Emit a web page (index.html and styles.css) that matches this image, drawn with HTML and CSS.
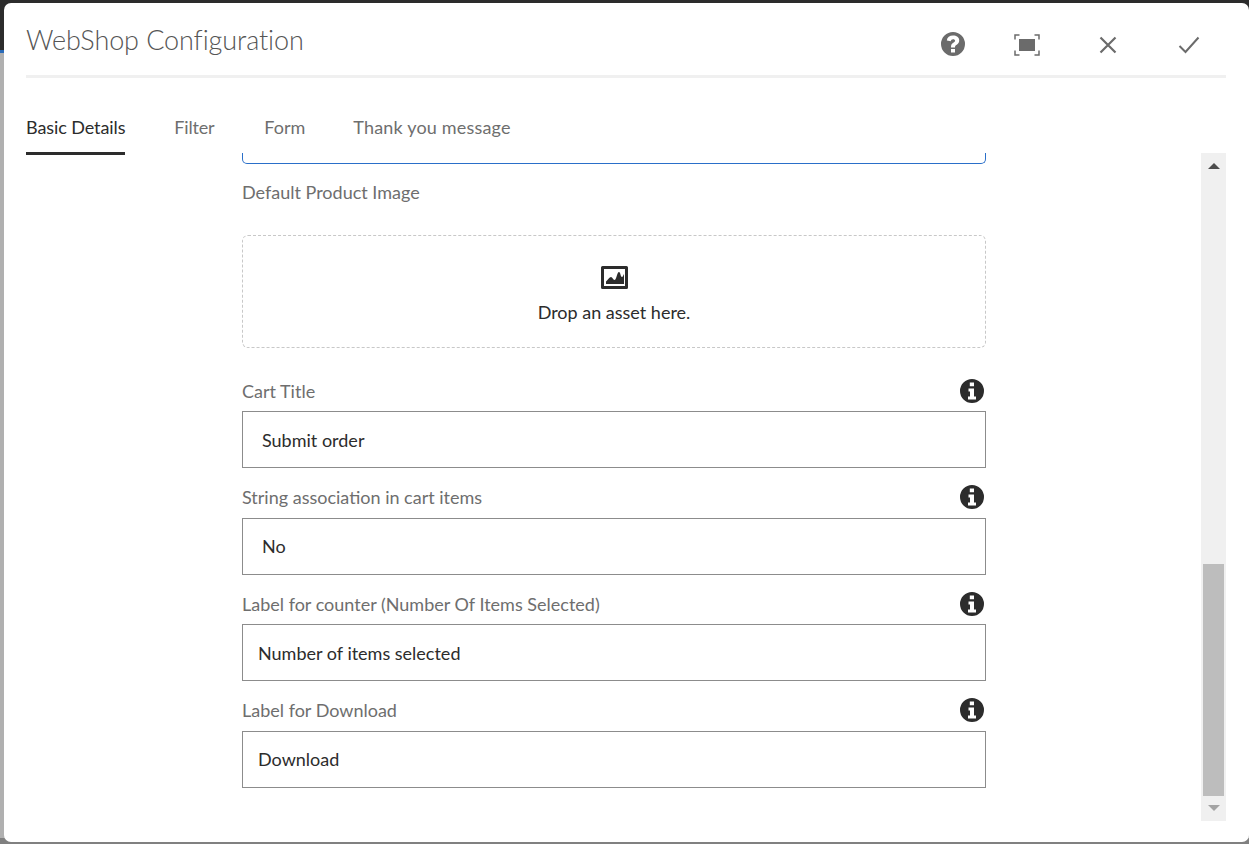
FILE: index.html
```html
<!DOCTYPE html>
<html lang="en">

<head>
  <meta charset="UTF-8" />
  <meta name="viewport" content="width=device-width, initial-scale=1.0" />
  <title>WebShop Configuration</title>
  <link rel="stylesheet" href="styles.css">
</head>

<body>

  <div class="dialog">
    <header class="dialog-header">
      <h1 class="dialog-title">WebShop Configuration</h1>
      <div class="dialog-actions">
        <svg class="action action-help" viewBox="0 0 24 24">
          <path fill-rule="evenodd" d="M12 0a12 12 0 1 0 0 24 12 12 0 0 0 0-24zM10 17h4v3.500h-4zM5.800 8.600C6.200 5.200 8.600 3.600 12 3.600c3.600 0 6.200 1.900 6.200 4.900 0 2.200-1.100 3.300-2.500 4.200-1.200.8-1.700 1.300-1.700 2.600v.2h-4v-.6c0-2.100.9-3.200 2.300-4.100 1.100-.7 1.800-1.200 1.800-2.100 0-.9-.8-1.500-2-1.500-1.400 0-2.200.8-2.300 2.100z" />
        </svg>
        <svg class="action action-fullscreen" viewBox="0 0 26 22">
          <rect x="5" y="5" width="16" height="12" />
          <path class="corner" d="M5.500 1H1v4.500M20.500 1H25v4.500M5.500 21H1v-4.500M20.500 21H25v-4.500" />
        </svg>
        <svg class="action action-close" viewBox="0 0 18 18">
          <path d="M1.500 1.500l15 15M16.500 1.500l-15 15" />
        </svg>
        <svg class="action action-done" viewBox="0 0 22 18">
          <path d="M1.500 10l6 6L20.500 1.500" />
        </svg>
      </div>
    </header>

    <nav class="tabs">
      <a class="tab active">Basic Details</a>
      <a class="tab tab-filter">Filter</a>
      <a class="tab">Form</a>
      <a class="tab tab-thanks">Thank you message</a>
    </nav>

    <div class="dialog-body">
      <div class="form-scroll">
        <div class="form">
          <div class="focused-field"></div>

          <div class="image-label">Default Product Image</div>
          <div class="dropzone">
            <svg class="dropzone-icon" viewBox="0 0 27 23">
              <path fill-rule="evenodd" d="M1.500 0h24A1.500 1.500 0 0 1 27 1.500v20a1.500 1.500 0 0 1-1.500 1.500h-24A1.500 1.500 0 0 1 0 21.500v-20A1.500 1.500 0 0 1 1.500 0zM3 3v17h21V3z" />
              <path d="M5 18v-2.500C6.500 14 8.500 11 10 11c1.500 0 2 3 3.500 3 2 0 2.500-8 4.500-8 1.500 0 1.500 5 3 5 .8 0 1.200-2 2-3v10z" />
            </svg>
            <div>Drop an asset here.</div>
          </div>

          <div class="field field-first">
            <div class="field-label">
              <span>Cart Title</span>
              <svg class="info" viewBox="0 0 24 24"><path fill-rule="evenodd" d="M12 0a12 12 0 1 0 0 24 12 12 0 0 0 0-24zM9.800 3.500h4.200v3.800H9.800zM8.500 9.500H14v8h2v3H8v-3h2v-5H8.500z" /></svg>
            </div>
            <div class="field-input indent">Submit order</div>
          </div>

          <div class="field">
            <div class="field-label">
              <span>String association in cart items</span>
              <svg class="info" viewBox="0 0 24 24"><path fill-rule="evenodd" d="M12 0a12 12 0 1 0 0 24 12 12 0 0 0 0-24zM9.800 3.500h4.200v3.800H9.800zM8.500 9.500H14v8h2v3H8v-3h2v-5H8.500z" /></svg>
            </div>
            <div class="field-input indent">No</div>
          </div>

          <div class="field">
            <div class="field-label">
              <span>Label for counter (Number Of Items Selected)</span>
              <svg class="info" viewBox="0 0 24 24"><path fill-rule="evenodd" d="M12 0a12 12 0 1 0 0 24 12 12 0 0 0 0-24zM9.800 3.500h4.200v3.800H9.800zM8.500 9.500H14v8h2v3H8v-3h2v-5H8.500z" /></svg>
            </div>
            <div class="field-input">Number of items selected</div>
          </div>

          <div class="field">
            <div class="field-label">
              <span>Label for Download</span>
              <svg class="info" viewBox="0 0 24 24"><path fill-rule="evenodd" d="M12 0a12 12 0 1 0 0 24 12 12 0 0 0 0-24zM9.800 3.500h4.200v3.800H9.800zM8.500 9.500H14v8h2v3H8v-3h2v-5H8.500z" /></svg>
            </div>
            <div class="field-input">Download</div>
          </div>
        </div>
      </div>

      <div class="scrollbar">
        <div class="arrow arrow-up"></div>
        <div class="thumb"></div>
        <div class="arrow arrow-down"></div>
      </div>
    </div>
  </div>

</body>

</html>
```

FILE: styles.css
```css
html,
body {
  height: 100%;
}

body {
  margin: 0;
  padding: 3px 0 2px 4px;
  box-sizing: border-box;
  overflow: hidden;
  font-family: "Lato", "Open Sans", sans-serif;
  color: #2c2c2c;
  /* page behind the modal */
  background: linear-gradient(#2c2c2c 0, #2c2c2c 50px, #2a6bb8 50px, #2a6bb8 53px, #b0b0b0 53px, #b0b0b0 838px, #808080 838px);
}

.dialog {
  height: 839px;
  display: flex;
  flex-direction: column;
  background: #ffffff;
  border-radius: 7px;
}

/* Header */
.dialog-header {
  height: 72px;
  margin: 0 23px 0 22px;
  display: flex;
  justify-content: space-between;
  align-items: center;
  border-bottom: 3px solid #f0f0f0;
}

.dialog-title {
  margin: 1px 0 0;
  font-size: 27px;
  font-weight: 300;
  letter-spacing: -0.1px;
  color: #555555;
}

.dialog-actions {
  height: 26px;
  margin-top: 10px;
  position: relative;
  width: 285px;
}

.action {
  position: absolute;
  fill: #6b6b6b;
}

.action-help {
  left: 0;
  top: 1px;
  width: 24px;
  height: 24px;
}

.action-fullscreen {
  left: 73px;
  top: 3px;
  width: 26px;
  height: 22px;
}

.action-fullscreen .corner {
  fill: none;
  stroke: #6b6b6b;
  stroke-width: 1.500;
}

.action-close {
  left: 158px;
  top: 5px;
  width: 18px;
  height: 18px;
  fill: none;
  stroke: #6b6b6b;
  stroke-width: 2.200;
}

.action-done {
  left: 237px;
  top: 5px;
  width: 22px;
  height: 18px;
  fill: none;
  stroke: #6b6b6b;
  stroke-width: 2;
}

/* Tabs */
.tabs {
  height: 75px;
  margin-left: 22px;
  display: flex;
  align-items: flex-end;
  gap: 48px;
  flex-shrink: 0;
}

.tab {
  height: 53px;
  box-sizing: border-box;
  padding-top: 14px;
  font-size: 18px;
  color: #6e6e6e;
  margin-bottom: -2px;
  position: relative;
  z-index: 1;
}

.tab.active {
  color: #2c2c2c;
  letter-spacing: -0.09px;
  border-bottom: 3px solid #2c2c2c;
}

.tab-filter {
  margin-left: 1px;
  letter-spacing: -0.2px;
  margin-right: 2px;
}

.tab-thanks {
  letter-spacing: 0.18px;
}

/* Body with scrollbar */
.dialog-body {
  height: 668px;
  display: flex;
  justify-content: space-between;
  padding-right: 23px;
}

.form-scroll {
  flex: 1;
  overflow: hidden;
  padding-left: 238px;
}

.form {
  width: 744px;
  font-size: 18px;
}

.focused-field {
  height: 11px;
  box-sizing: border-box;
  border: 1px solid #2a6fc9;
  border-top: none;
  border-radius: 0 0 5px 5px;
}

.image-label {
  margin-top: 16px;
  line-height: 24px;
  color: #6e6e6e;
}

.dropzone {
  height: 113px;
  margin-top: 31px;
  box-sizing: border-box;
  border: 1px dashed #c8c8c8;
  border-radius: 6px;
  display: flex;
  flex-direction: column;
  align-items: center;
  padding-top: 30px;
  gap: 12px;
}

.dropzone-icon {
  width: 27px;
  height: 23px;
  fill: #2c2c2c;
}

.field {
  margin-top: 15.67px;
}

.field-first {
  margin-top: 29px;
}

.field-label {
  height: 27px;
  display: flex;
  justify-content: space-between;
  align-items: center;
  color: #6e6e6e;
}

.info {
  width: 24px;
  height: 24px;
  margin-right: 2px;
  fill: #2c2c2c;
}

.field-input {
  height: 57px;
  box-sizing: border-box;
  margin-top: 7px;
  padding: 0 15px;
  border: 1px solid #8c8c8c;
  display: flex;
  align-items: center;
  background: #ffffff;
}

.field-input.indent {
  padding-left: 19px;
}

/* Scrollbar */
.scrollbar {
  width: 25px;
  background: #f0f0f0;
  display: flex;
  flex-direction: column;
  align-items: center;
}

.arrow {
  width: 0;
  height: 0;
  border-left: 6px solid transparent;
  border-right: 6px solid transparent;
}

.arrow-up {
  margin-top: 10px;
  border-bottom: 6px solid #4d4d4d;
}

.arrow-down {
  margin-top: 9px;
  border-top: 6px solid #a3a3a3;
}

.thumb {
  width: 21px;
  height: 232px;
  margin-top: 395px;
  background: #bdbdbd;
}
```
